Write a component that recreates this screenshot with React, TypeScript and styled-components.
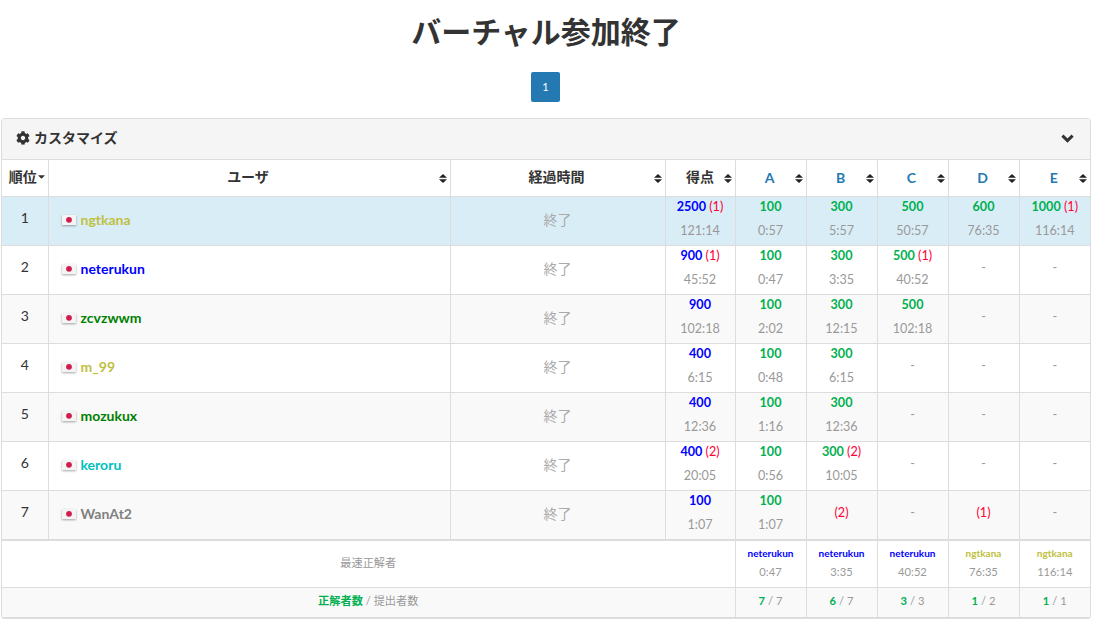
import styled, { createGlobalStyle } from "styled-components";
import { FaCog, FaCaretDown } from "react-icons/fa";

const GlobalStyle = createGlobalStyle`
  html, body {
    margin: 0;
    padding: 0;
    background: #fff;
    color: #333;
    font-family: Lato, "Noto Sans CJK JP", sans-serif;
    font-size: 14px;
    line-height: 1.43;
  }
`;

const Page = styled.div`
  padding: 0 6px 0 1px;
  width: 1090px;
  box-sizing: content-box;
`;

const Title = styled.h1`
  margin: 0;
  padding-top: 10px;
  height: 72px;
  box-sizing: border-box;
  text-align: center;
  font-size: 30px;
  font-weight: 700;
  line-height: 43px;
  color: #333;
`;

const Pager = styled.div`
  display: flex;
  justify-content: center;
  height: 46px;
  padding-right: 1px;
  box-sizing: border-box;
`;

const PageButton = styled.div`
  width: 29px;
  height: 30px;
  border-radius: 2px;
  background: #2479b3;
  color: #fff;
  font-size: 11px;
  display: flex;
  align-items: center;
  justify-content: center;
`;

const Panel = styled.div`
  border: 1px solid #ddd;
  border-radius: 3px;
  box-shadow: 0 1px 1px rgba(0, 0, 0, 0.05);
  width: 1090px;
  box-sizing: border-box;
`;

const PanelHead = styled.div`
  height: 41px;
  background: #f5f5f5;
  border-bottom: 1px solid #ddd;
  display: flex;
  align-items: center;
  justify-content: space-between;
  padding: 0 16px 2px 14px;
  font-size: 14px;
  font-weight: 700;
  box-sizing: border-box;
`;

const PanelTitle = styled.div`
  display: flex;
  align-items: center;
  gap: 4px;
`;

const Table = styled.table`
  width: 1088px;
  table-layout: fixed;
  border-collapse: collapse;
`;

const Th = styled.th<{ $task?: boolean }>`
  position: relative;
  height: 36px;
  padding: 0 0 ${(p) => (p.$task ? 0 : 2)}px;
  box-sizing: border-box;
  border: 1px solid #ddd;
  border-top: 0;
  font-size: 14px;
  font-weight: 700;
  text-align: center;
  vertical-align: middle;
  color: ${(p) => (p.$task ? "#2479b3" : "#333")};
  &:first-child { border-left: 0; }
  &:last-child { border-right: 0; }
`;

const SortIcon = styled.svg`
  position: absolute;
  right: 3px;
  top: 14px;
  width: 8px;
  height: 9px;
`;

const Label = styled.span<{ $shift?: number }>`
  position: relative;
  left: ${(p) => p.$shift ?? 0}px;
`;

const RankLabel = styled.span`
  position: relative;
  left: 3px;
  display: inline-flex;
  align-items: center;
  svg { margin-left: -1px; }
`;

const Row = styled.tr<{ $kind: "active" | "odd" | "even" }>`
  background: ${(p) =>
    p.$kind === "active" ? "#d9edf7" : p.$kind === "odd" ? "#f9f9f9" : "#fff"};
`;

const Td = styled.td`
  height: 49px;
  padding: 0;
  box-sizing: border-box;
  border: 1px solid #ddd;
  text-align: center;
  vertical-align: middle;
  font-size: 12.6px;
  &:first-child { border-left: 0; }
  &:last-child { border-right: 0; }
`;

const RankCell = styled(Td)`
  padding-bottom: 4px;
  font-size: 14px;
`;

const UserCell = styled(Td)`
  text-align: left;
  padding-left: 13px;
`;

const UserWrap = styled.div`
  display: flex;
  align-items: center;
  gap: 5px;
  font-weight: 700;
  font-size: 14px;
`;

const UserName = styled.span<{ $color: string }>`
  color: ${(p) => p.$color};
`;

const FlagBox = styled.svg`
  width: 14px;
  height: 10px;
  filter: drop-shadow(0 1px 1px rgba(0, 0, 0, 0.35));
`;

const TimeCell = styled(Td)`
  color: #aaa;
  font-size: 14px;
`;

const Score = styled.div<{ $color: string }>`
  font-weight: 700;
  color: ${(p) => p.$color};
  line-height: 18px;
  padding-top: 1px;
`;

const Wrong = styled.span`
  color: #ff0033;
  font-weight: 400;
`;

const Clock = styled.div`
  color: #999;
  line-height: 20px;
  margin-top: 5px;
`;

const ScoreInner = styled.div`
  padding-bottom: 4px;
`;

const Dash = styled.span`
  color: #999;
  position: relative;
  top: -2px;
`;

const FootTop = styled.tr`
  background: #fff;
`;

const FootBottom = styled.tr`
  background: #f9f9f9;
`;

const FootCell = styled.td<{ $tall?: boolean; $thick?: boolean }>`
  height: ${(p) => (p.$tall ? 48 : 30)}px;
  padding: 0 0 ${(p) => (p.$tall ? 1 : 2)}px;
  box-sizing: border-box;
  border: 1px solid #ddd;
  border-top: ${(p) => (p.$thick ? "2px" : "1px")} solid #ddd;
  text-align: center;
  vertical-align: middle;
  font-size: 11.2px;
  color: #999;
  &:first-child { border-left: 0; }
  &:last-child { border-right: 0; }
`;

const FastUser = styled.div<{ $color: string }>`
  color: ${(p) => p.$color};
  font-size: 10px;
  font-weight: 700;
  line-height: 16px;
`;

const FastClock = styled.div`
  font-size: 11.2px;
  line-height: 18px;
  margin-top: 2px;
  color: #999;
`;

const Green = styled.span`
  color: #00b050;
  font-weight: 700;
`;

const BLUE = "#0000ff";
const GREEN = "#00b050";
const YELLOW = "#c0c040";

type Cell = { score?: number; wrong?: number; time?: string } | null;

interface User {
  name: string;
  color: string;
  score: number;
  wrong?: number;
  time: string;
  cells: Cell[];
}

const users: User[] = [
  {
    name: "ngtkana",
    color: YELLOW,
    score: 2500,
    wrong: 1,
    time: "121:14",
    cells: [
      { score: 100, time: "0:57" },
      { score: 300, time: "5:57" },
      { score: 500, time: "50:57" },
      { score: 600, time: "76:35" },
      { score: 1000, wrong: 1, time: "116:14" },
    ],
  },
  {
    name: "neterukun",
    color: BLUE,
    score: 900,
    wrong: 1,
    time: "45:52",
    cells: [
      { score: 100, time: "0:47" },
      { score: 300, time: "3:35" },
      { score: 500, wrong: 1, time: "40:52" },
      null,
      null,
    ],
  },
  {
    name: "zcvzwwm",
    color: "#008000",
    score: 900,
    time: "102:18",
    cells: [
      { score: 100, time: "2:02" },
      { score: 300, time: "12:15" },
      { score: 500, time: "102:18" },
      null,
      null,
    ],
  },
  {
    name: "m_99",
    color: YELLOW,
    score: 400,
    time: "6:15",
    cells: [{ score: 100, time: "0:48" }, { score: 300, time: "6:15" }, null, null, null],
  },
  {
    name: "mozukux",
    color: "#008000",
    score: 400,
    time: "12:36",
    cells: [{ score: 100, time: "1:16" }, { score: 300, time: "12:36" }, null, null, null],
  },
  {
    name: "keroru",
    color: "#00c0c0",
    score: 400,
    wrong: 2,
    time: "20:05",
    cells: [{ score: 100, time: "0:56" }, { score: 300, wrong: 2, time: "10:05" }, null, null, null],
  },
  {
    name: "WanAt2",
    color: "#808080",
    score: 100,
    time: "1:07",
    cells: [{ score: 100, time: "1:07" }, { wrong: 2 }, null, { wrong: 1 }, null],
  },
];

const fastest = [
  { name: "neterukun", color: BLUE, time: "0:47" },
  { name: "neterukun", color: BLUE, time: "3:35" },
  { name: "neterukun", color: BLUE, time: "40:52" },
  { name: "ngtkana", color: YELLOW, time: "76:35" },
  { name: "ngtkana", color: YELLOW, time: "116:14" },
];

const counts = [
  [7, 7],
  [6, 7],
  [3, 3],
  [1, 2],
  [1, 1],
];

const widths = [46, 402, 215, 70, 71, 71, 71, 71, 71];

const Flag = () => (
  <FlagBox viewBox="0 0 14 10">
    <rect width="14" height="10" fill="#f4f4f4" />
    <circle cx="7" cy="4.8" r="2.9" fill="#d01c4a" />
  </FlagBox>
);

const Sort = () => (
  <SortIcon viewBox="0 0 8 9">
    <path d="M4 0L8 3.7H0zM4 9L0 5.3H8z" fill="#222" />
  </SortIcon>
);

const Chevron = () => (
  <svg width="13" height="9" viewBox="0 0 13 9">
    <path d="M1.4 1.6L6.5 6.6L11.6 1.6" fill="none" stroke="#333" strokeWidth="3" />
  </svg>
);

const ScoreBlock = ({ cell, color }: { cell: Cell; color: string }) => {
  if (!cell) return <Dash>-</Dash>;
  if (cell.score === undefined)
    return (
      <ScoreInner>
        <Wrong>({cell.wrong})</Wrong>
      </ScoreInner>
    );
  return (
    <ScoreInner>
      <Score $color={color}>
        {cell.score}
        {cell.wrong ? <Wrong> ({cell.wrong})</Wrong> : null}
      </Score>
      <Clock>{cell.time}</Clock>
    </ScoreInner>
  );
};

const App = () => (
  <Page>
    <GlobalStyle />
    <Title>バーチャル参加終了</Title>
    <Pager>
      <PageButton>1</PageButton>
    </Pager>
    <Panel>
      <PanelHead>
        <PanelTitle>
          <FaCog size={14} />
          カスタマイズ
        </PanelTitle>
        <Chevron />
      </PanelHead>
      <Table>
        <colgroup>
          {widths.map((w, i) => (
            <col key={i} style={{ width: w }} />
          ))}
        </colgroup>
        <thead>
          <tr>
            <Th>
              <RankLabel>
                順位
                <FaCaretDown size={11} />
              </RankLabel>
            </Th>
            <Th>
              <Label $shift={-1}>ユーザ</Label>
              <Sort />
            </Th>
            <Th>
              <Label $shift={-1}>経過時間</Label>
              <Sort />
            </Th>
            <Th>
              得点
              <Sort />
            </Th>
            {["A", "B", "C", "D", "E"].map((h) => (
              <Th key={h} $task>
                <Label $shift={-1}>{h}</Label>
                <Sort />
              </Th>
            ))}
          </tr>
        </thead>
        <tbody>
          {users.map((u, i) => (
            <Row key={u.name} $kind={i === 0 ? "active" : i % 2 === 0 ? "odd" : "even"}>
              <RankCell>{i + 1}</RankCell>
              <UserCell>
                <UserWrap>
                  <Flag />
                  <UserName $color={u.color}>{u.name}</UserName>
                </UserWrap>
              </UserCell>
              <TimeCell>終了</TimeCell>
              <Td>
                <ScoreBlock cell={{ score: u.score, wrong: u.wrong, time: u.time }} color={BLUE} />
              </Td>
              {u.cells.map((c, j) => (
                <Td key={j}>
                  <ScoreBlock cell={c} color={GREEN} />
                </Td>
              ))}
            </Row>
          ))}
          <FootTop>
            <FootCell colSpan={4} $tall $thick>最速正解者</FootCell>
            {fastest.map((f, i) => (
              <FootCell key={i} $tall $thick>
                <FastUser $color={f.color}>{f.name}</FastUser>
                <FastClock>{f.time}</FastClock>
              </FootCell>
            ))}
          </FootTop>
          <FootBottom>
            <FootCell colSpan={4}>
              <Green>正解者数</Green> / 提出者数
            </FootCell>
            {counts.map(([a, b], i) => (
              <FootCell key={i}>
                <Green>{a}</Green> / {b}
              </FootCell>
            ))}
          </FootBottom>
        </tbody>
      </Table>
    </Panel>
  </Page>
);

export default App;
